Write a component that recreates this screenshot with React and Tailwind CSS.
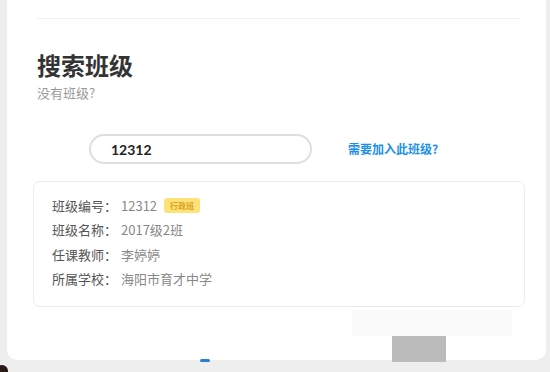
export default function App() {
  const rows = [
    ["班级编号：", "12312", true],
    ["班级名称：", "2017级2班", false],
    ["任课教师：", "李婷婷", false],
    ["所属学校：", "海阳市育才中学", false],
  ];
  return (
    <div className="w-[550px] h-[372px] bg-[#eeeeee] relative overflow-hidden" style={{ fontFamily: '"Noto Sans CJK SC", "Noto Sans", sans-serif' }}>
      <div className="ml-[7px] w-[539px] h-[360px] bg-white rounded-b-[10px] relative">
        <div className="pt-[18px] px-[30px]">
          <div className="h-px bg-[#f0f0f0] w-[483px]"></div>
          <div className="mt-[31px] text-[24px] leading-[30px] font-bold text-[#333]">搜索班级</div>
          <div className="mt-[4px] text-[13px] leading-[18px] text-[#999]">没有班级?</div>
          <div className="mt-[32px] flex items-center">
            <div className="ml-[52px] w-[223px] h-[30px] rounded-full border-2 border-[#dedede] flex items-center pl-[20px] text-[14px] font-bold text-[#222]" style={{ fontFamily: 'Lato, "Noto Sans", sans-serif' }}>12312</div>
            <div className="ml-[36px] text-[12px] font-bold text-[#1e90e8]">需要加入此班级?</div>
          </div>
          <div className="mt-[17px] -ml-[4px] w-[492px] h-[126px] border border-[#ececec] rounded-[7px] pt-[11px] pl-[18px] flex flex-col">
            {rows.map(([k, v, badge]) => (
              <div key={k} className="flex items-center h-[24.5px] text-[13px]">
                <span className="w-[69px] text-[#555]">{k}</span>
                <span className="text-[#888]">{v}</span>
                {badge && (
                  <span className="ml-[7px] h-[15px] px-[6px] rounded-[3px] bg-[#ffe17a] text-[#d9a21b] text-[8px] leading-[15px] font-bold">行政班</span>
                )}
              </div>
            ))}
          </div>
          <div className="mt-[3px] ml-[315px] w-[160px] h-[26px] bg-[#fafafa]"></div>
          <div className="ml-[355px] w-[54px] h-[26px] bg-[#bbbbbb]"></div>
        </div>
      </div>
      <div className="absolute left-[200px] top-[359px] w-[10px] h-[3px] rounded-full bg-[#2a7fd4]"></div>
      <div className="absolute -left-[4px] top-[365px] w-[12px] h-[12px] rounded-full bg-[#2a1a15]"></div>
    </div>
  );
}
